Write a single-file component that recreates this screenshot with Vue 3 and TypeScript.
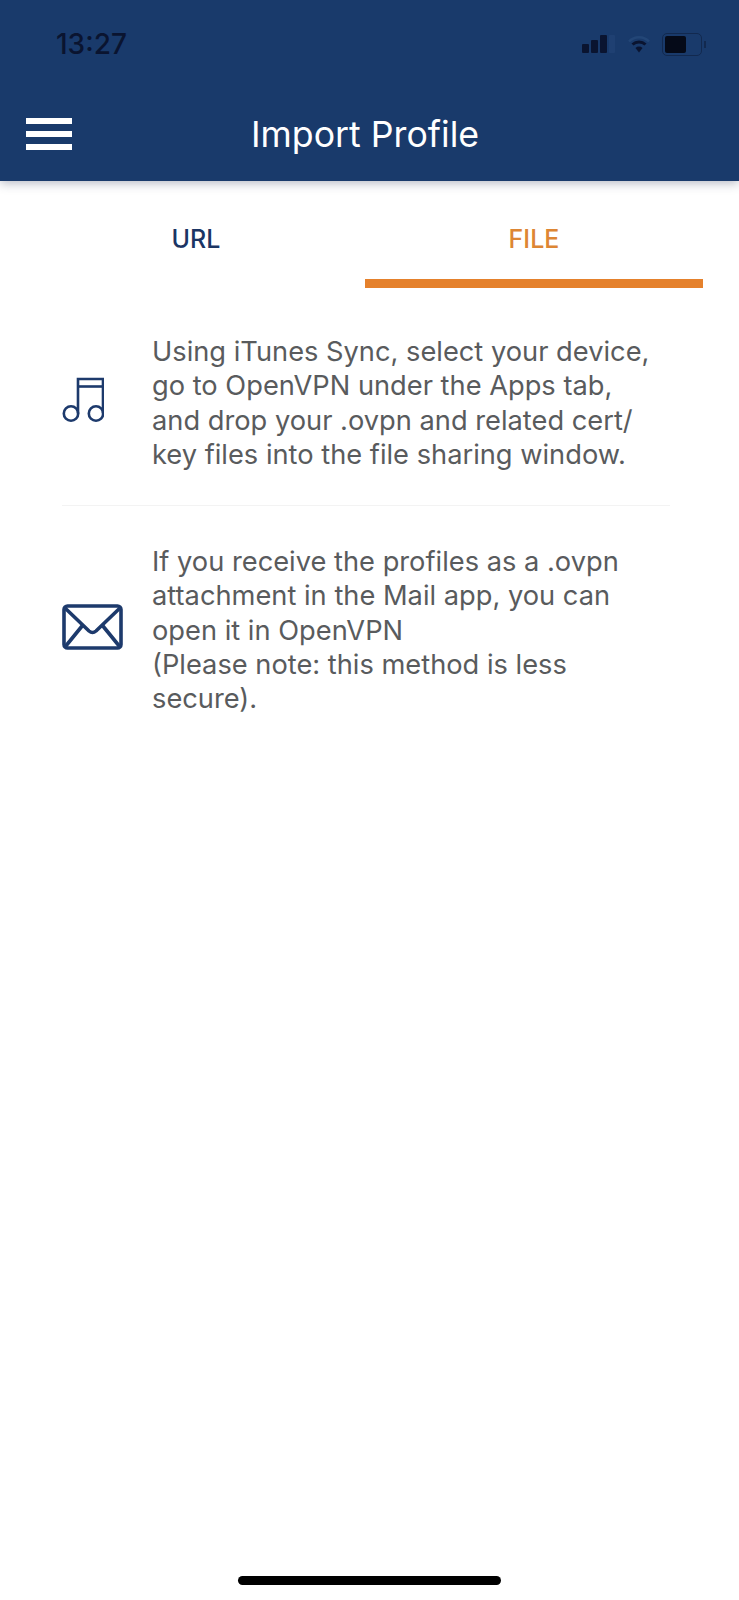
<template>
  <div class="screen">
    <header class="app-header">
      <div class="status-bar">
        <span class="clock">13:27</span>
        <div class="status-icons">
          <svg width="35" height="20" viewBox="0 0 35 20">
            <rect x="1" y="10" width="7" height="9" rx="1" fill="#0a1430" />
            <rect x="10" y="6" width="7" height="13" rx="1" fill="#0a1430" />
            <rect x="19" y="1" width="7" height="18" rx="1" fill="#0a1430" />
            <rect x="28" y="1" width="6" height="18" rx="1" fill="#1f4072" />
          </svg>
          <svg width="24" height="20" viewBox="0 0 24 20">
            <path d="M2 7.500a14 14 0 0 1 20 0" fill="none" stroke="#234677" stroke-width="2.500" />
            <path d="M5.500 10.500a9.500 9.500 0 0 1 13 0" fill="none" stroke="#0a1430" stroke-width="3" />
            <path d="M8.500 14a5 5 0 0 1 7 0L12 18.500z" fill="#0a1430" />
          </svg>
          <div class="battery">
            <div class="battery-body"><div class="battery-level"></div></div>
            <div class="battery-tip"></div>
          </div>
        </div>
      </div>
      <div class="title-bar">
        <div class="menu-btn"><span></span><span></span><span></span></div>
        <h1 class="title">Import Profile</h1>
      </div>
    </header>

    <nav class="tabs">
      <div v-for="t in tabs" :key="t" class="tab" :class="{ active: t === activeTab }">{{ t }}</div>
    </nav>

    <section class="list">
      <div class="row row-first">
        <div class="row-icon icon-music">
          <svg width="42" height="46" viewBox="0 0 42 46" fill="none" stroke="#1d3a6c" stroke-width="2.600">
            <circle cx="9" cy="36.500" r="7.200" />
            <circle cx="34" cy="36.500" r="7.200" />
            <path d="M16 36.500V2H41V36.500" />
            <path d="M16 9.500H41" />
          </svg>
        </div>
        <p>Using iTunes Sync, select your device, go to OpenVPN under the Apps tab, and drop your .ovpn and related cert/<br />key files into the file sharing window.</p>
      </div>
      <div class="divider"></div>
      <div class="row">
        <div class="row-icon icon-mail">
          <svg width="61" height="46" viewBox="0 0 61 46" fill="none" stroke="#1d3a6c" stroke-width="3.600" stroke-linejoin="round">
            <rect x="2" y="2" width="57" height="42" rx="3.500" />
            <path d="M3 4L27 27Q30.500 30 34 27L58 4" />
            <path d="M3 43L20.500 21.500M58 43L40.500 21.500" />
          </svg>
        </div>
        <p>If you receive the profiles as a .ovpn attachment in the Mail app, you can open it in OpenVPN<br />(Please note: this method is less secure).</p>
      </div>
    </section>

    <div class="home-indicator"></div>
  </div>
</template>

<script setup lang="ts">
const tabs: string[] = ['URL', 'FILE']
const activeTab = 'FILE'
</script>

<style>
html, body { margin: 0; background: #fff; }
</style>

<style scoped>
.screen { position: relative; width: 739px; height: 1600px; background: #fff; overflow: hidden; font-family: "Inter", "Liberation Sans", sans-serif; }
.app-header { background: #193a6b; height: 181px; box-shadow: 0 2px 10px rgba(40, 50, 80, 0.35); position: relative; }
.status-bar { display: flex; justify-content: space-between; align-items: center; height: 88px; padding: 0 33px 0 56px; }
.clock { font-size: 28px; font-weight: 500; color: #0a1430; }
.status-icons { display: flex; align-items: center; gap: 11px; }
.battery { display: flex; align-items: center; gap: 2px; }
.battery-body { width: 40px; height: 23px; border: 1.500px solid #12294f; border-radius: 5px; padding: 2px; box-sizing: border-box; }
.battery-level { width: 21px; height: 100%; background: #050a18; border-radius: 2px; }
.battery-tip { width: 2px; height: 7px; background: #12294f; }
.title-bar { display: flex; align-items: center; height: 92px; padding: 0 0 1px 26px; }
.menu-btn { display: flex; flex-direction: column; gap: 7px; width: 46px; }
.menu-btn span { display: block; height: 6px; background: #fff; }
.title { margin: 0 0 0 179px; font-family: "Inter", sans-serif; font-size: 35.700px; font-weight: 400; color: #fff; }
.tabs { display: flex; padding: 0 36px 0 27px; height: 107px; }
.tab { flex: 1; display: flex; justify-content: center; padding-top: 43px; box-sizing: border-box; height: 107px; font-family: "Inter", sans-serif; font-size: 25px; font-weight: 500; color: #1b3564; }
.tab.active { color: #dd8634; border-bottom: 9px solid #e5812c; }
.list { padding: 47px 0 0 62px; }
.row { display: flex; align-items: center; }
.row-icon { width: 90px; flex: none; display: flex; }
.icon-music { margin-bottom: 7px; }
.icon-mail { margin-bottom: 8px; }
.row p { margin: 0; width: 500px; font-size: 27.250px; line-height: 34.300px; color: #595b5d; }
.divider { width: 608px; height: 1px; background: #f3f3f3; margin: 33px 0 39px; }
.home-indicator { position: absolute; left: 238px; top: 1576px; width: 263px; height: 9px; border-radius: 5px; background: #000; }
</style>
